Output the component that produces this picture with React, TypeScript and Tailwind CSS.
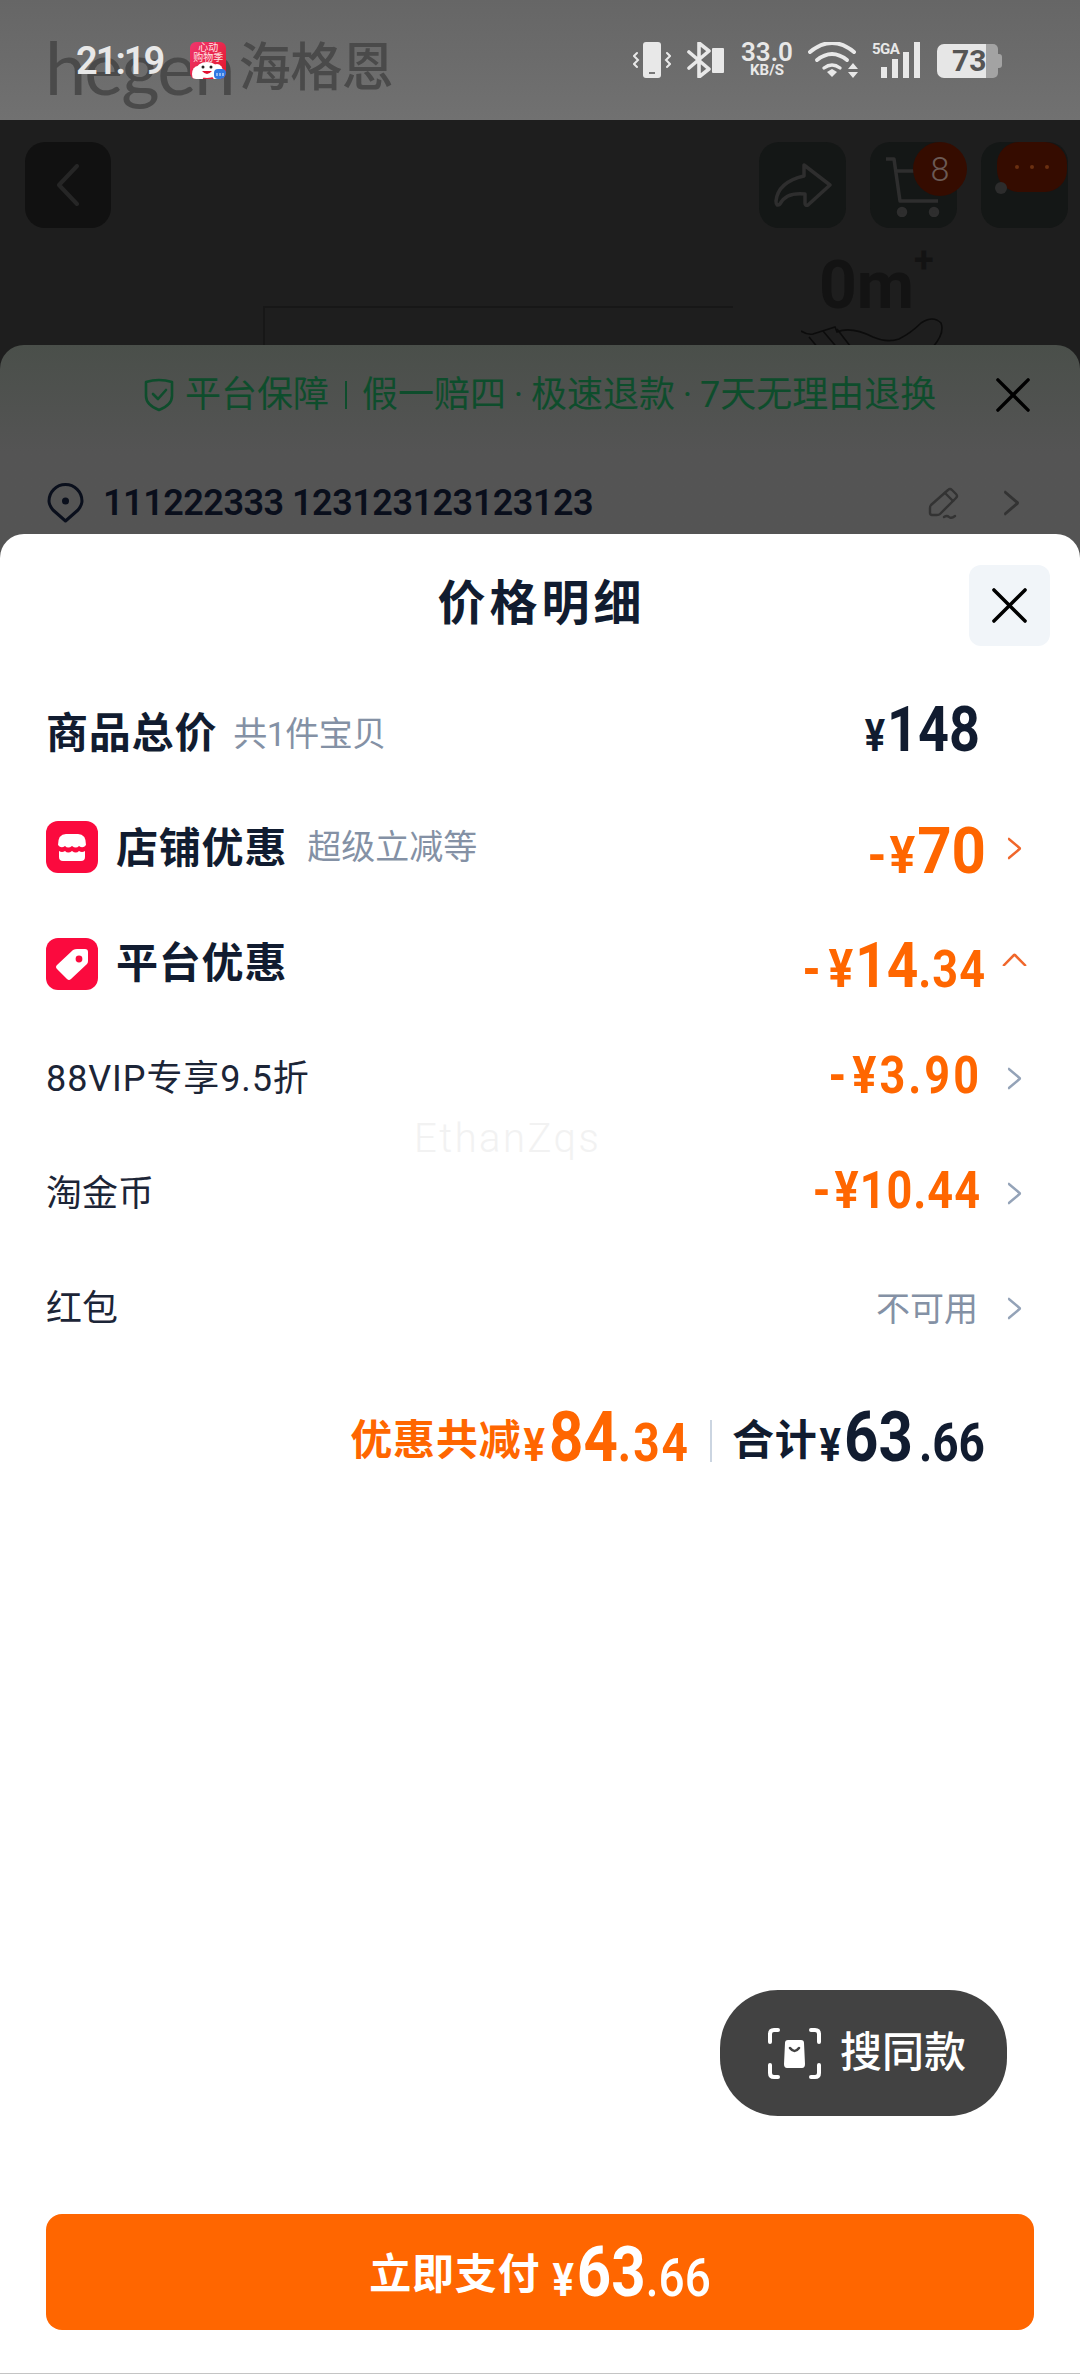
import React from "react";

const Chevron = ({ className = "", up = false }: { className?: string; up?: boolean }) => (
    <svg viewBox="0 0 24 24" className={className} fill="none" stroke="currentColor" strokeWidth="3" strokeLinecap="round" strokeLinejoin="round" preserveAspectRatio="none">
        {up ? <polyline points="2,21 12,4 22,21" /> : <polyline points="3,2 21,12 3,22" />}
    </svg>
);

const Cross = ({ className = "" }: { className?: string }) => (
    <svg viewBox="0 0 36 36" className={className} fill="none" stroke="currentColor" strokeWidth="3.6" strokeLinecap="round">
        <line x1="2" y1="2" x2="34" y2="34" />
        <line x1="34" y1="2" x2="2" y2="34" />
    </svg>
);

function Money({
    sign,
    whole,
    cents,
    yenClass,
    wholeClass,
    centsClass,
    signClass = "",
    stretch = "scale-y-[1.16]",
}: {
    sign?: string;
    whole: string;
    cents?: string;
    yenClass: string;
    wholeClass: string;
    centsClass?: string;
    signClass?: string;
    stretch?: string;
}) {
    return (
        <span className={`inline-block whitespace-nowrap font-bold leading-none ${stretch}`}>
            {sign && <span className={signClass}>{sign}</span>}
            <span className={yenClass}>¥</span>
            <span className={wholeClass}>{whole}</span>
            {cents && <span className={centsClass}>{cents}</span>}
        </span>
    );
}

function AppBadge() {
    return (
        <div className="relative w-[36px] h-[37px] ml-[27px] rounded-[6px] overflow-hidden bg-gradient-to-br from-[#f0356d] to-[#e2101f]">
            <div className="absolute left-0 right-0 top-[1px] flex flex-col items-center text-[#ffe3e3] text-[10px] leading-[10px]">
                <span>心动</span>
                <span className="whitespace-nowrap">购物季</span>
            </div>
            <svg viewBox="0 0 36 37" className="absolute inset-0 w-full h-full">
                <ellipse cx="8" cy="32" rx="6" ry="8" fill="#fff" />
                <ellipse cx="27" cy="30" rx="6" ry="8" fill="#fff" />
                <ellipse cx="17" cy="28" rx="11" ry="8" fill="#fff" />
                <circle cx="13" cy="25" r="1.500" fill="#222" />
                <circle cx="21" cy="25" r="1.500" fill="#222" />
                <path d="M12 29q5 6 10 0z" fill="#e01030" />
                <rect x="24" y="27" width="12" height="10" rx="4" fill="#2f78e2" />
                <path d="M27 31v3M30 31v3M33 31v3" stroke="#cfe2ff" strokeWidth="1.200" />
            </svg>
        </div>
    );
}

function StatusBar() {
    return (
        <div className="absolute top-0 left-0 right-0 h-[120px] flex items-start pt-[42px] pl-[76px] pr-[78px] text-[#e8e8e8]">
            <span className="text-[38px] leading-[38px] font-semibold tracking-[-2px]">21:19</span>
            <AppBadge />

            <div className="ml-auto flex items-start">
                <svg viewBox="0 0 38 36" className="w-[38px] h-[36px]" fill="none" stroke="currentColor" strokeWidth="2" strokeLinecap="round">
                    <rect x="10" y="0" width="18" height="36" rx="3" fill="currentColor" stroke="none" />
                    <rect x="16" y="30" width="6" height="2" fill="#777" stroke="none" />
                    <path d="M4 11l-3 3 4 4-4 4 3 3" />
                    <path d="M34 11l3 3-4 4 4 4-3 3" />
                </svg>
                <svg viewBox="0 0 37 36" className="w-[37px] h-[36px] ml-[16px]" fill="none">
                    <path d="M2 10l20 17-10 8V1l10 8L2 26" stroke="currentColor" strokeWidth="3.6" strokeLinejoin="round" strokeLinecap="round" />
                    <rect x="25" y="6" width="12" height="25" rx="1" fill="currentColor" />
                </svg>
                <div className="w-[56px] ml-[15px] flex flex-col items-center font-semibold">
                    <span className="text-[26px] leading-[21px]">33.0</span>
                    <span className="text-[15px] leading-[15px] font-bold">KB/S</span>
                </div>
                <svg viewBox="0 0 50 36" className="w-[50px] h-[36px] ml-[13px]" fill="none" stroke="currentColor" strokeWidth="4" strokeLinecap="round">
                    <path d="M2 10q22-18 44 0" />
                    <path d="M9 18q15-12 30 0" />
                    <path d="M16 26q8-6 16 0" strokeWidth="3.4" />
                    <path d="M19 30l5-3 5 3-5 5z" fill="currentColor" stroke="none" />
                    <path d="M40 27l5-6 5 6zM40 30l5 6 5-6z" fill="currentColor" stroke="none" />
                </svg>
                <div className="relative w-[48px] h-[36px] ml-[14px]">
                    <span className="absolute left-0 top-[-1px] text-[15px] leading-[16px] font-bold tracking-[-0.5px]">5GA</span>
                    <div className="absolute inset-0 flex items-end justify-end gap-[5px]">
                        <span className="w-[6px] h-[11px] bg-[#e8e8e8]" />
                        <span className="w-[6px] h-[19px] bg-[#e8e8e8]" />
                        <span className="w-[6px] h-[26px] bg-[#e8e8e8]" />
                        <span className="w-[6px] h-[36px] bg-[#e8e8e8]" />
                    </div>
                </div>
                <div className="relative w-[65px] h-[34px] mt-[2px] ml-[17px] flex">
                    <div className="w-[49px] h-full rounded-l-[7px] bg-[#e6e6e6]" />
                    <div className="w-[12px] h-full rounded-r-[5px] bg-[#a3a3a3]" />
                    <div className="w-[4px] h-[14px] self-center rounded-r-[3px] bg-[#a3a3a3]" />
                    <span className="absolute left-[15px] top-0 text-[30px] leading-[34px] font-bold text-[#555]">73</span>
                </div>
            </div>
        </div>
    );
}

function PageBehind() {
    return (
        <>
            <header className="relative h-[120px] shrink-0 bg-gradient-to-b from-[#666666] to-[#717171] pl-[45px] pt-[29px] flex items-start text-[#4a4a4a]">
                <span className="font-['Lato',sans-serif] text-[74px] leading-[76px] tracking-[-2px]">hegen</span>
                <span className="ml-[5px] mt-[14px] text-[52px] leading-[52px] font-medium -tracking-[0.5px]">海格恩</span>
                <StatusBar />
            </header>

            <div className="h-[250px] shrink-0 bg-[#1e1e1e] overflow-hidden">
                <div className="flex pt-[22px] pl-[25px] pr-[12px]">
                    <div className="w-[86px] h-[86px] rounded-[20px] bg-[#111111] flex items-center justify-center text-[#262626]">
                        <svg viewBox="0 0 24 42" className="w-[24px] h-[42px]" fill="none" stroke="currentColor" strokeWidth="4" strokeLinecap="round" strokeLinejoin="round">
                            <polyline points="21,2 3,21 21,40" />
                        </svg>
                    </div>
                    <div className="ml-auto w-[87px] h-[86px] rounded-[20px] bg-[#141716] flex items-center justify-center text-[#2e2e2e]">
                        <svg viewBox="0 0 58 46" className="w-[58px] h-[46px]" fill="none" stroke="currentColor" strokeWidth="3.500" strokeLinejoin="round">
                            <path d="M30 3l26 20-22 20q-3 1-3-2v-9Q12 30 6 42q-4 3-4-3Q4 20 30 14z" />
                        </svg>
                    </div>
                    <div className="relative ml-[24px] w-[87px] h-[86px] rounded-[20px] bg-[#141716] text-[#2e2e2e]">
                        <svg viewBox="0 0 56 60" className="absolute left-[15px] top-[15px] w-[56px] h-[60px]" fill="none" stroke="currentColor" strokeWidth="3.500" strokeLinejoin="round">
                            <path d="M1 2h8l6 42h38" />
                            <path d="M10 14h36" />
                            <circle cx="17" cy="55" r="3.500" fill="currentColor" />
                            <circle cx="49" cy="55" r="3.500" fill="currentColor" />
                        </svg>
                        <span className="absolute top-0 right-[-10px] w-[54px] h-[54px] rounded-full bg-[#350c00] flex items-center justify-center text-[34px] font-light text-[#6b5a55]">8</span>
                    </div>
                    <div className="relative ml-[24px] w-[87px] h-[86px] rounded-[20px] bg-[#141716]">
                        <span className="absolute left-[16px] top-0 w-[70px] h-[50px] rounded-[22px] bg-[#350c00] flex items-center justify-center gap-[11px]">
                            <i className="w-[4px] h-[4px] rounded-full bg-[#6a3010]" />
                            <i className="w-[4px] h-[4px] rounded-full bg-[#6a3010]" />
                            <i className="w-[4px] h-[4px] rounded-full bg-[#6a3010]" />
                        </span>
                        <span className="absolute left-[14px] top-[40px] w-[12px] h-[12px] rounded-full bg-[#2c2c2c]" />
                    </div>
                </div>
                <div className="flex items-start pl-[263px] mt-[32px]">
                    <div className="w-[470px] h-[60px] mt-[46px] border-l-2 border-t-2 border-[#171717]" />
                    <div className="ml-[86px] flex flex-col text-[#131313]">
                        <span className="text-[66px] leading-[48px] font-bold">
                            0m<sup className="text-[36px] align-[18px] leading-none">+</sup>
                        </span>
                        <svg viewBox="0 0 142 40" className="w-[142px] h-[40px] mt-[5px] -ml-[18px] text-[#0c0c0c]" fill="none" stroke="currentColor" strokeWidth="1.6">
                            <path d="M0 16q6 4 12 3l22-7 2 5q14-6 36 5 14 6 26 2 12-6 22-16 12-8 20 0 4 10-8 24" />
                            <path d="M8 22l20 24M22 16l22 26M36 14l20 26" />
                        </svg>
                    </div>
                </div>
            </div>
        </>
    );
}

function OrderCard() {
    return (
        <div className="h-[213px] shrink-0 -mt-[25px] relative rounded-t-[24px] bg-gradient-to-b from-[#4a4f4a] to-[#545454] to-[50%]">
            <div className="flex items-center h-[100px] pl-[143px] text-[36px] leading-none text-[#0e4d2c]">
                <svg viewBox="0 0 32 34" className="w-[32px] h-[34px]" fill="none" stroke="currentColor" strokeWidth="2.6" strokeLinejoin="round" strokeLinecap="round">
                    <path d="M3 4q13-4 26 0v14q0 9-13 14Q3 27 3 18z" />
                    <polyline points="10,16 15,21 23,12" />
                </svg>
                <span className="ml-[10px]">平台保障</span>
                <span className="w-[33px] flex justify-center"><i className="w-[2px] h-[28px] bg-[#0e4d2c]" /></span>
                <span>假一赔四</span>
                <span className="w-[25px] text-center">·</span>
                <span>极速退款</span>
                <span className="w-[25px] text-center">·</span>
                <span className="whitespace-nowrap">7天无理由退换</span>
                <Cross className="w-[34px] h-[34px] ml-[60px] text-black shrink-0" />
            </div>
            <div className="flex items-center h-[58px] mt-[29px] pl-[47px] pr-[60px]">
                <svg viewBox="0 0 37 40" className="w-[37px] h-[40px] text-[#0a0f1c]" fill="none" stroke="currentColor" strokeWidth="3">
                    <path d="M18.500 38L6 27Q2 22 2 18a16.500 16.500 0 0 1 33 0q0 4-4 9z" strokeLinejoin="round" />
                    <circle cx="18.500" cy="18" r="3.500" fill="currentColor" stroke="none" />
                </svg>
                <span className="ml-[19px] text-[36px] leading-none font-semibold tracking-[-0.5px] text-[#0a0f1c]">111222333 123123123123123</span>
                <svg viewBox="0 0 32 32" className="ml-auto w-[32px] h-[32px] text-[#333333]" fill="none" stroke="currentColor" strokeWidth="2.400" strokeLinejoin="round" strokeLinecap="round">
                    <path d="M20 3q2-2 4 0l4 4q2 2 0 4L12 27q-1 1-3 1H4q-2 0-2-2v-5q0-2 1-3z" />
                    <path d="M17 6l8 8M16 30q3-2 5 0t6-1" />
                </svg>
                <Chevron className="w-[17px] h-[26px] ml-[43px] text-[#333333]" />
            </div>
        </div>
    );
}

function Row({
    left,
    right,
    chevron = "text-[#94a3b8]",
}: {
    left: React.ReactNode;
    right?: React.ReactNode;
    chevron?: string;
}) {
    return (
        <div className="h-[115px] flex items-center justify-between">
            <div className="flex items-center">{left}</div>
            <div className="flex items-center">
                {right}
                <span className="w-[56px] flex justify-end pr-[12px]">
                    <Chevron className={`w-[15px] h-[23px] ${chevron}`} />
                </span>
            </div>
        </div>
    );
}

function PriceSheet() {
    const strong = "text-[42px] leading-none font-bold tracking-[0.8px] text-[#111c30]";
    const hint = "text-[34px] leading-none text-[#8491a5]";
    const normal = "text-[36px] leading-none text-[#1c2537]";

    return (
        <section className="relative flex-1 -mt-[24px] rounded-t-[24px] bg-white border-b border-[#c4c4c4] flex flex-col px-[46px] pb-[43px]">
            <div className="relative h-[82px] mt-[31px] flex items-center justify-center">
                <h1 className="-mt-[4px] ml-[3px] text-[48px] leading-none font-bold tracking-[4px] text-[#111c30]">价格明细</h1>
                <button className="absolute right-[-16px] top-0 w-[81px] h-[81px] rounded-[12px] bg-[#f1f5f9] flex items-center justify-center text-black">
                    <Cross className="w-[35px] h-[35px]" />
                </button>
            </div>

            <div className="mt-[29px]">
                <div className="h-[115px] flex items-center justify-between">
                    <div className="flex items-center">
                        <span className={strong}>商品总价</span>
                        <span className={`${hint} ml-[16px] tracking-[-0.5px]`}>共1件宝贝</span>
                    </div>
                    <div className="pr-[54px] text-[#111c30] -mt-[8px]">
                        <Money yenClass="text-[38px] mr-[2px]" wholeClass="text-[54px]" whole="148" />
                    </div>
                </div>

                <Row
                    chevron="text-[#f0672b]"
                    left={
                        <>
                            <svg viewBox="0 0 52 52" className="w-[52px] h-[52px] -mt-[4px]">
                                <rect width="52" height="52" rx="12" fill="#fb0a3e" />
                                <path d="M12 24q0-11 8-11h12q8 0 8 11q-3 4-7 1q-3 3-7 0q-4 3-7 0q-4 3-7-1z" fill="#fff" />
                                <path d="M13 30q3 2 6 0q3 3 7 0q4 3 7 0q3 2 6 0v6q0 4-4 4H17q-4 0-4-4z" fill="#fff" />
                            </svg>
                            <span className={`${strong} ml-[18px]`}>店铺优惠</span>
                            <span className={`${hint} ml-[20px] -mt-[4px]`}>超级立减等</span>
                        </>
                    }
                    right={
                        <div className="text-[#ff6600] mt-[4px] -mr-[8px]">
                            <Money stretch="scale-y-[1.08]" sign="-" signClass="text-[48px] mr-[3px]" yenClass="text-[48px] mr-[2px]" wholeClass="text-[60px]" whole="70" />
                        </div>
                    }
                />

                <div className="h-[115px] flex items-center justify-between">
                    <div className="flex items-center">
                        <svg viewBox="0 0 52 52" className="w-[52px] h-[52px]">
                            <rect width="52" height="52" rx="12" fill="#fb0a3e" />
                            <path d="M31 11h8q3 0 3 3v9q0 2-1 3L25 41q-2 2-4 0L11 31q-2-2 0-4L27 12q2-1 4-1z" fill="#fff" />
                            <circle cx="33" cy="21" r="3.400" fill="#fb0a3e" />
                        </svg>
                        <span className={`${strong} ml-[18px]`}>平台优惠</span>
                    </div>
                    <div className="flex items-center">
                        <div className="text-[#ff6600] mt-[4px] -mr-[8px]">
                            <Money sign="-" signClass="text-[46px] mr-[8px]" yenClass="text-[46px] mr-[2px]" wholeClass="text-[55px]" centsClass="text-[45px] tracking-[1px]" whole="14" cents=".34" />
                        </div>
                        <span className="w-[56px] flex justify-end pr-[7px] -mt-[8px]">
                            <Chevron up className="w-[25px] h-[15px] text-[#f0672b]" />
                        </span>
                    </div>
                </div>

                <Row
                    left={<span className={`${normal} tracking-[0.9px]`}>88VIP专享9.5折</span>}
                    right={
                        <div className="text-[#ff6600] -mt-[6px] -mr-[4px] tracking-[3px]">
                            <Money sign="-" signClass="text-[45px] mr-[3px]" yenClass="text-[45px]" wholeClass="text-[45px]" whole="3.90" />
                        </div>
                    }
                />
                <Row
                    left={<span className={normal}>淘金币</span>}
                    right={
                        <div className="text-[#ff6600] -mt-[6px] -mr-[3px] tracking-[1px]">
                            <Money sign="-" signClass="text-[45px] mr-[3px]" yenClass="text-[45px]" wholeClass="text-[45px]" whole="10.44" />
                        </div>
                    }
                />
                <Row left={<span className={normal}>红包</span>} right={<span className={hint}>不可用</span>} />
            </div>

            <div className="mt-[50px] flex items-center justify-end pr-[49px] h-[50px]">
                <span className="text-[42px] leading-none font-bold tracking-[0.8px] text-[#ff6600]">优惠共减</span>
                <div className="text-[#ff6600] ml-[2px] -mt-[6px]">
                    <Money yenClass="text-[40px] mr-[4px]" wholeClass="text-[60px]" centsClass="text-[46px] tracking-[2px]" whole="84" cents=".34" />
                </div>
                <span className="w-[2px] h-[42px] mx-[20px] bg-[#cbd5e1]" />
                <span className="text-[42px] leading-none font-bold tracking-[0.8px] text-[#111c30]">合计</span>
                <div className="text-[#111c30] ml-[2px] -mt-[6px]">
                    <Money yenClass="text-[40px] mr-[3px]" wholeClass="text-[60px]" centsClass="text-[46px] tracking-[0px] ml-[6px]" whole="63" cents=".66" />
                </div>
            </div>

            <button className="mt-auto self-end mr-[27px] w-[287px] h-[126px] rounded-[58px] bg-[#424242] flex items-center pl-[48px] text-white">
                <svg viewBox="0 0 53 51" className="w-[53px] h-[51px]" fill="none" stroke="currentColor" strokeWidth="4" strokeLinecap="round">
                    <path d="M10 2H6Q2 2 2 6v8M43 2h4q4 0 4 4v8M2 37v8q0 4 4 4h4M51 37v8q0 4-4 4h-4" />
                    <path d="M17 15q0-3 3-3h13q3 0 3 3l1 21q0 4-3 4H19q-3 0-3-4z" fill="currentColor" stroke="none" />
                    <path d="M22 20q4.500 6 9 0" stroke="#424242" strokeWidth="2.600" />
                </svg>
                <span className="ml-[19px] text-[42px] leading-none font-medium">搜同款</span>
            </button>

            <button className="mt-[98px] h-[116px] rounded-[16px] bg-[#ff6600] flex items-center justify-center text-white">
                <span className="text-[42px] leading-none font-bold tracking-[0.8px] mt-[6px]">立即支付</span>
                <div className="ml-[12px] mt-[2px]">
                    <Money yenClass="text-[40px] mr-[3px]" wholeClass="text-[60px]" centsClass="text-[46px] font-medium" whole="63" cents=".66" />
                </div>
            </button>

            <span className="absolute left-[414px] top-[585px] text-[40px] leading-none font-light tracking-[2.500px] text-[#f2f2f2]">EthanZqs</span>
        </section>
    );
}

export default function App() {
    return (
        <div className="w-[1080px] h-[2374px] overflow-hidden flex flex-col bg-white font-['Roboto','Noto_Sans_CJK_SC',sans-serif]">
            <PageBehind />
            <OrderCard />
            <PriceSheet />
        </div>
    );
}
